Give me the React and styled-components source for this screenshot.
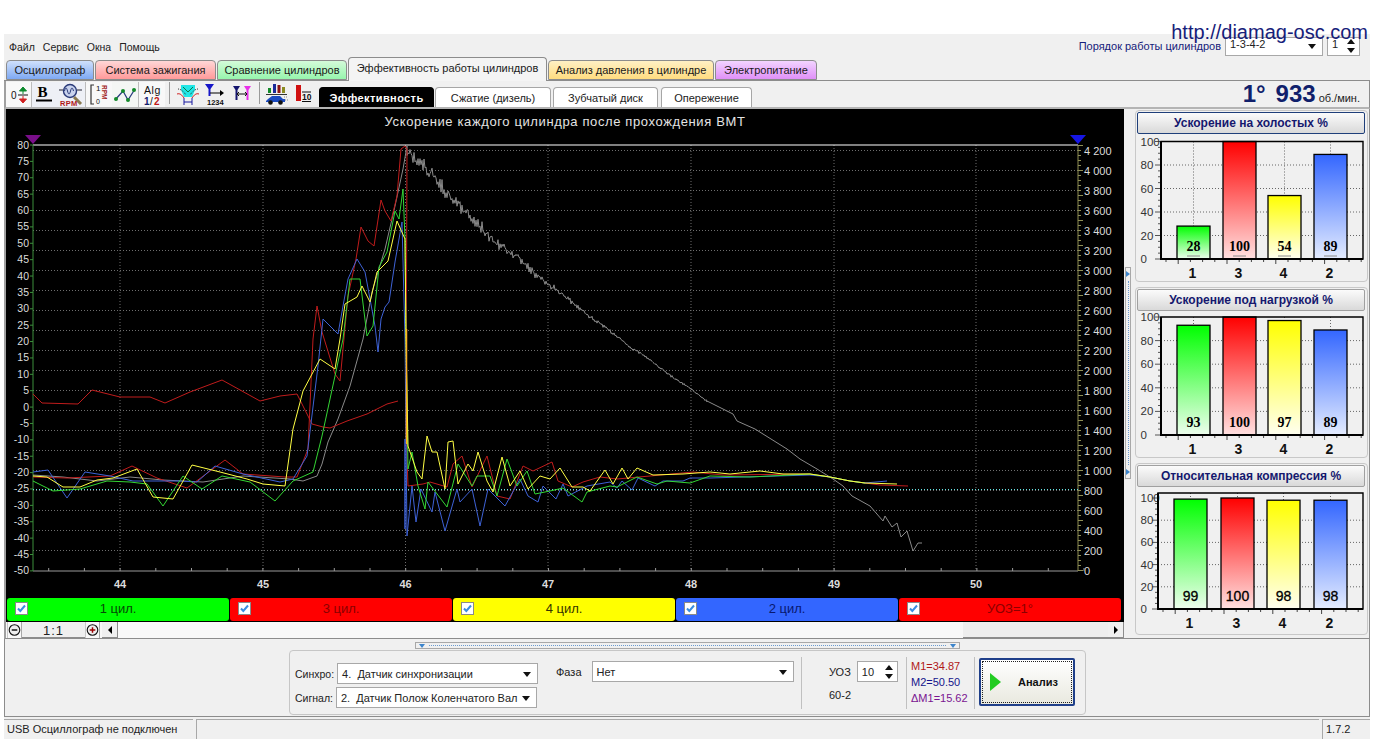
import React from "react";
import styled, { createGlobalStyle } from "styled-components";

const Global = createGlobalStyle`
  html, body { margin: 0; padding: 0; background: #fff; overflow: hidden; }
  body { font-family: "Liberation Sans", Arial, sans-serif; font-size: 11px; color: #111; }
  * { box-sizing: border-box; }
`;

const Page = styled.div`
  position: relative;
  width: 1382px;
  height: 744px;
  padding: 34px 12px 0 4px;
  background: #fff;
`;
const UrlMark = styled.div`
  position: absolute;
  top: 20px;
  right: 14px;
  font-size: 20px;
  line-height: 24px;
  color: #16207a;
  z-index: 2;
`;
const Window = styled.div`
  width: 1366px;
  height: 705px;
  background: #f0f0f0;
  display: flex;
  flex-direction: column;
`;
const MenuBar = styled.div`
  height: 27px;
  display: flex;
  align-items: center;
  justify-content: space-between;
  padding: 0 10px 1px 5px;
`;
const MenuList = styled.div`
  display: flex;
  gap: 8px;
  margin-top: 1px;
  font-size: 10.5px;
  color: #222;
`;
const OrderBox = styled.div`
  display: flex;
  align-items: center;
  gap: 4px;
  margin-top: -1px;
`;
const OrderLabel = styled.span`
  color: #16207a;
  font-size: 11px;
`;
const Field = styled.div`
  position: relative;
  width: ${(p) => p.$w}px;
  height: ${(p) => p.$h || 21}px;
  background: #fff;
  border: 1px solid #a8a8a8;
  padding: ${(p) => (p.$tight ? "0 0 0 4px" : "4px 0 0 4px")};
  font-size: 11px;
  color: #222;
  white-space: nowrap;
  overflow: hidden;
`;
const DropArrow = styled.i`
  position: absolute;
  right: 6px;
  top: 50%;
  margin-top: -2px;
  border-left: 4px solid transparent;
  border-right: 4px solid transparent;
  border-top: 5px solid #111;
`;
const SpinArrows = styled.i`
  position: absolute;
  right: 3px;
  top: 50%;
  margin-top: -7px;
  width: 9px;
  height: 14px;
  &::before, &::after {
    content: "";
    position: absolute;
    left: 0;
    border-left: 4px solid transparent;
    border-right: 4px solid transparent;
  }
  &::before { top: 0; border-bottom: 5px solid #111; }
  &::after { bottom: 0; border-top: 5px solid #111; }
`;
const TabBar = styled.div`
  height: 21px;
  padding-left: 2px;
  display: flex;
  gap: 1px;
  align-items: flex-end;
  border-bottom: 1px solid #8c8c8c;
`;
const Tab = styled.div`
  width: ${(p) => p.$w}px;
  height: ${(p) => (p.$active ? 24 : 20)}px;
  margin-bottom: ${(p) => (p.$active ? -1 : 0)}px;
  border: 1px solid #8c8c8c;
  border-bottom: ${(p) => (p.$active ? 0 : 1)}px solid #8c8c8c;
  border-radius: 4px 4px 0 0;
  background: ${(p) => p.$bg};
  font-size: 11px;
  line-height: ${(p) => (p.$active ? 21 : 18)}px;
  text-align: center;
  color: #1a1a1a;
  white-space: nowrap;
`;
const ToolRow = styled.div`
  height: 28px;
  display: flex;
  align-items: flex-end;
  border-right: 1px solid #8c8c8c;
  border-left: 2px solid #a0a0a0;
  border-bottom: 2px solid #b4b4b4;
  position: relative;
`;
const ToolGroup = styled.div`
  display: flex;
  height: 25px;
  align-items: center;
  background: ${(p) => p.$bg || "transparent"};
  border-right: ${(p) => (p.$edge ? "1px solid #bcbcbc" : "0")};
`;
const ToolSep = styled.span`
  width: 1px;
  height: 22px;
  margin: 0 ${(p) => p.$r ?? 4}px 2px ${(p) => p.$l ?? 4}px;
  background: #9a9a9a;
  align-self: center;
`;
const SubTabs = styled.div`
  display: flex;
  gap: 1px;
  align-items: flex-end;
  margin-left: 4px;
  height: 25px;
`;
const SubTab = styled.div`
  width: ${(p) => p.$w}px;
  height: 20px;
  margin-right: ${(p) => p.$mr || 0}px;
  border: 1px solid ${(p) => (p.$active ? "#000" : "#a6a6a6")};
  border-bottom: 0;
  border-radius: 4px 4px 0 0;
  background: ${(p) => (p.$active ? "#000" : "#fff")};
  color: ${(p) => (p.$active ? "#fff" : "#222")};
  font-weight: ${(p) => (p.$active ? 700 : 400)};
  letter-spacing: ${(p) => (p.$active ? "0.4px" : 0)};
  font-size: 11px;
  line-height: 20px;
  text-align: center;
`;
const Speed = styled.div`
  margin-left: auto;
  margin-right: 9px;
  display: flex;
  align-items: baseline;
  color: #101f6b;
  font-weight: 700;
  font-size: 24px;
  line-height: 26px;
`;
const SpeedGap = styled.span`
  margin-left: 10px;
`;
const SpeedUnit = styled.span`
  margin-left: 3px;
  font-size: 11px;
  line-height: 1;
  font-weight: 400;
  color: #222;
`;
const Main = styled.div`
  height: 530px;
  display: flex;
  border-left: 2px solid #a0a0a0;
  border-right: 1px solid #8c8c8c;
  border-bottom: 1px solid #8c8c8c;
`;
const ChartCol = styled.div`
  width: 1118px;
  display: flex;
  flex-direction: column;
`;
const ChartSvg = styled.svg`
  display: block;
  width: 1118px;
  height: 489px;
  background: #000;
`;
const LegendRow = styled.div`
  height: 24px;
  background: #000;
  display: flex;
  gap: 1px;
  padding: 0 3px 1px 1px;
  align-items: stretch;
`;
const LegendBtn = styled.div`
  position: relative;
  width: 222px;
  border-radius: 3px;
  background: ${(p) => p.$bg};
  color: ${(p) => p.$fg};
  font-size: 13px;
  line-height: 22px;
  text-align: center;
`;
const Check = styled.span`
  position: absolute;
  left: 8px;
  top: 4px;
  width: 13px;
  height: 13px;
  background: #fff;
  border: 1px solid #8a8a8a;
  display: flex;
`;
const ScrollRow = styled.div`
  height: 16px;
  display: flex;
  align-items: stretch;
  padding-left: 1px;
  background: #f8f8f8;
`;
const ZoomBtn = styled.div`
  width: 15px;
  display: flex;
  align-items: center;
  justify-content: center;
  border-right: 1px solid #a8a8a8;
  border-left: 1px solid #c8c8c8;
`;
const ZoomValue = styled.div`
  width: 63px;
  background: #efefef;
  border-bottom: 1px solid #8c8c8c;
  font-size: 13px;
  letter-spacing: 1px;
  line-height: 18px;
  text-align: center;
  color: #222;
`;
const ArrowBtn = styled.div`
  width: 16px;
  margin-left: ${(p) => p.$ml || 0}px;
  background: #f0f0f0;
  border-right: 1px solid #8c8c8c;
  border-bottom: 1px solid #8c8c8c;
  display: flex;
  align-items: center;
  justify-content: center;
`;
const Tri = styled.i`
  border-top: 4px solid transparent;
  border-bottom: 4px solid transparent;
  border-${(p) => (p.$left ? "right" : "left")}: 4px solid #000;
`;
const ScrollThumb = styled.div`
  width: 145px;
  margin-left: auto;
  background: #eeeeee;
  border-bottom: 1px solid #8c8c8c;
`;
const VSash = styled.div`
  width: 7px;
  display: flex;
  padding: 158px 0 0 1px;
`;
const SashBox = styled.div`
  display: flex;
  flex-direction: ${(p) => (p.$h ? "row" : "column")};
  align-items: center;
  justify-content: space-between;
  width: ${(p) => (p.$h ? "545px" : "6px")};
  height: ${(p) => (p.$h ? "7px" : "212px")};
  padding: ${(p) => (p.$h ? "0 3px" : "3px 0")};
  border: 1px solid #a8a8a8;
  background: #f0f0f0;
`;
const SashDots = styled.span`
  flex: 1;
  margin: ${(p) => (p.$h ? "0 4px" : "4px 0")};
  ${(p) => (p.$h ? "border-top" : "border-left")}: 1px dotted #6a9bd0;
`;
const SashTri = styled.i`
  ${(p) =>
    p.$h
      ? `border-left:3px solid transparent;border-right:3px solid transparent;border-top:4px solid #3d85cc;`
      : `border-top:3px solid transparent;border-bottom:3px solid transparent;border-left:4px solid #3d85cc;`}
`;
const Side = styled.div`
  width: 233px;
  margin-left: 4px;
  padding-top: 1px;
  display: flex;
  flex-direction: column;
  gap: 5px;
`;
const GroupBox = styled.div`
  height: ${(p) => p.$h || 172}px;
  padding: 1px 1px 0 1px;
  border: 1px solid #c8c8c8;
  border-radius: 4px;
  display: flex;
  flex-direction: column;
  align-items: flex-start;
`;
const GroupTitle = styled.div`
  width: 228px;
  height: 22px;
  flex: none;
  border: 1px solid ${(p) => (p.$focus ? "#1f3f7a" : "#a0a0a0")};
  border-radius: 2px;
  background: linear-gradient(#fbfbfb, #d9d9d9);
  color: #15186e;
  font-weight: 700;
  font-size: 12px;
  line-height: 20px;
  text-align: center;
`;
const BarSvg = styled.svg`
  display: block;
  width: 228px;
  height: 146px;
  flex: none;
`;
const Lower = styled.div`
  height: 80px;
  border-left: 1px solid #8c8c8c;
  border-right: 1px solid #8c8c8c;
  border-bottom: 1px solid #8c8c8c;
  padding: 3px 0 0 284px;
  display: flex;
  flex-direction: column;
`;
const HSashWrap = styled.div`
  margin: 0 0 1px 126px;
`;
const Console = styled.div`
  width: 797px;
  height: 65px;
  border: 1px solid #c6c6c6;
  border-radius: 4px;
  display: flex;
  align-items: stretch;
  padding: 6px 0 5px 5px;
`;
const ConsoleCol = styled.div`
  display: flex;
  flex-direction: column;
  gap: ${(p) => p.$gap ?? 3}px;
  width: ${(p) => p.$w}px;
  flex: none;
  padding-top: ${(p) => p.$top || 0}px;
  padding-left: ${(p) => p.$left || 0}px;
  border-right: ${(p) => (p.$sep ? "1px solid #c0c0c0" : "0")};
`;
const Labelled = styled.div`
  display: flex;
  align-items: center;
  gap: ${(p) => p.$gap || 4}px;
  color: #222;
  font-size: ${(p) => p.$fs || 11}px;
`;
const Measure = styled.div`
  font-size: 11px;
  line-height: 16px;
  color: ${(p) => p.$c};
  white-space: nowrap;
`;
const RunButton = styled.div`
  width: 96px;
  height: 48px;
  margin: 1px 0 0 4px;
  border: 2px solid #1f3f8a;
  border-radius: 2px;
  outline: 1px dotted #222;
  outline-offset: -4px;
  background: linear-gradient(#ffffff, #e9e9df);
  display: flex;
  align-items: center;
  padding-left: 9px;
  font-weight: 700;
  font-size: 11px;
  color: #111;
  flex: none;
`;
const RunIcon = styled.i`
  margin-right: 17px;
  border-top: 9px solid transparent;
  border-bottom: 9px solid transparent;
  border-left: 11px solid #22cc22;
`;
const StatusBar = styled.div`
  flex: 1;
  display: flex;
  gap: 3px;
  padding-top: 2px;
`;
const StatusCell = styled.div`
  width: ${(p) => p.$w}px;
  flex: ${(p) => (p.$grow ? 1 : "none")};
  border-left: ${(p) => (p.$lead ? "0" : "1px solid #a8a8a8")};
  border-top: 1px solid #a8a8a8;
  font-size: 11px;
  line-height: 19px;
  padding-left: 3px;
  color: #222;
  white-space: nowrap;
`;

/* ------ chart data ------ */
const P = (a) => a.map((v) => v.join(",")).join(" ");
const tail = [[830, 478], [850, 482], [865, 484]];
const RED = [
  [33, 478], [67, 479], [110, 477], [132, 467], [157, 479], [187, 489], [225, 461], [243, 475], [285, 478], [297, 478], [308, 450],
  [313, 340], [317, 307], [322, 333], [335, 375], [340, 382], [348, 297], [356, 260], [361, 228], [368, 242], [374, 247], [381, 201],
  [385, 212], [391, 222], [397, 197], [401, 150], [405, 147], [407, 150], [406, 430], [408, 487], [423, 485], [430, 483], [447, 488],
  [453, 465], [462, 457], [472, 488], [487, 457], [497, 497], [510, 500], [523, 467], [533, 472], [552, 463], [558, 482], [572, 488],
  [583, 483], [600, 478], [617, 480], [650, 477], [693, 473], [723, 476], [810, 475], ...tail, [880, 486], [908, 487],
];
const RED2 = [
  [33, 395], [42, 404], [78, 405], [92, 391], [120, 398], [150, 398], [165, 404], [190, 393], [222, 381], [260, 402], [280, 397],
  [297, 395], [312, 425], [323, 428], [330, 429], [347, 422], [367, 415], [387, 405], [398, 402],
];
const BLUE = [
  [33, 473], [48, 471], [67, 499], [85, 473], [110, 477], [133, 482], [180, 482], [197, 483], [215, 467], [243, 475], [280, 483], [293, 480],
  [307, 457], [318, 367], [323, 320], [338, 335], [343, 307], [348, 280], [357, 260], [365, 273], [375, 327], [378, 353], [381, 320],
  [385, 308], [389, 303], [395, 263], [402, 223], [405, 340], [407, 537], [412, 487], [416, 523], [421, 490], [432, 513], [435, 493],
  [445, 532], [457, 490], [460, 503], [472, 490], [480, 527], [488, 490], [505, 507], [520, 480], [528, 497], [538, 503], [543, 487],
  [556, 500], [563, 485], [568, 497], [587, 487], [610, 483], [617, 489], [622, 482], [632, 491], [638, 479], [655, 487], [663, 482],
  [683, 482], [690, 479], [710, 479], [810, 476], ...tail, [887, 482],
];
const GREEN = [
  [33, 482], [53, 492], [80, 490], [107, 482], [130, 483], [147, 485], [163, 507], [183, 477], [202, 490], [222, 477], [250, 483],
  [275, 502], [293, 482], [313, 473], [322, 437], [343, 340], [350, 280], [360, 280], [367, 337], [373, 327], [379, 268], [387, 253],
  [395, 212], [399, 220], [403, 190], [405, 240], [406, 340], [408, 470], [412, 453], [418, 487], [425, 510], [428, 483], [447, 508],
  [458, 465], [472, 487], [477, 477], [490, 477], [497, 497], [507, 460], [517, 487], [527, 472], [535, 495], [550, 492], [563, 489],
  [582, 503], [587, 493], [610, 487], [617, 488], [637, 478], [657, 485], [667, 482], [690, 484], [710, 477], [750, 478], [810, 475], ...tail,
];
const YELLOW = [
  [33, 477], [47, 478], [63, 488], [80, 488], [97, 481], [113, 479], [137, 470], [153, 498], [173, 500], [192, 466], [220, 473], [247, 480],
  [263, 485], [285, 487], [293, 430], [303, 392], [320, 360], [335, 370], [340, 340], [345, 305], [357, 298], [362, 287], [370, 303],
  [377, 273], [388, 262], [397, 222], [405, 240], [406, 340], [408, 447], [417, 473], [422, 480], [427, 437], [432, 453], [437, 453],
  [445, 490], [448, 443], [453, 442], [458, 485], [468, 465], [473, 472], [478, 453], [487, 482], [493, 493], [502, 458], [510, 487],
  [520, 472], [528, 490], [540, 477], [550, 480], [560, 469], [572, 488], [583, 488], [590, 492], [605, 471], [613, 485], [622, 469],
  [628, 480], [637, 469], [653, 476], [683, 475], [710, 473], [730, 475], [760, 472], [783, 475], [810, 475], ...tail, [897, 485],
];
const GRAY_HEAD = [
  [33, 476], [63, 478], [97, 482], [130, 478], [163, 481], [203, 483], [243, 477], [290, 480], [303, 482], [317, 477], [322, 465],
  [328, 443], [338, 420], [350, 387], [363, 340], [372, 293], [385, 250], [395, 207], [403, 170], [407, 147],
];
const GRAY_TAIL = [
  [707, 402], [733, 415], [737, 422], [755, 430], [787, 450], [800, 460], [817, 470], [833, 480], [843, 487], [852, 497], [870, 507],
  [883, 522], [885, 517], [892, 528], [897, 524], [901, 538], [907, 532], [913, 552], [918, 544], [922, 544],
];
const interp = (pts, x) => {
  for (let i = 1; i < pts.length; i++) {
    if (x <= pts[i][0]) {
      const [a, b] = [pts[i - 1], pts[i]];
      return a[1] + ((b[1] - a[1]) * (x - a[0])) / (b[0] - a[0]);
    }
  }
  return pts[pts.length - 1][1];
};
const hash = (x) => {
  const s = Math.sin(x * 12.9898) * 43758.5453;
  return (s - Math.floor(s)) * 2 - 1;
};
const grayNoise = (() => {
  const mean = [[407, 150], [480, 228], [548, 285], [620, 340], [707, 402]];
  const amp = [[407, 6], [480, 5.5], [520, 3.5], [548, 2.5], [620, 1.4], [707, 0.8]];
  const out = [];
  for (let x = 407; x <= 707; x += 1) {
    const wobble = 1.2 * Math.sin(x / 7) * (x < 560 ? 1 : 0.5);
    out.push([x, interp(mean, x) + wobble + ((x % 2 ? 1 : -1) * 0.4 + hash(x) * 0.9) * interp(amp, x)]);
  }
  return out;
})();
const GRAY = [...GRAY_HEAD, ...grayNoise, ...GRAY_TAIL];

const range = (a, b, s) => {
  const r = [];
  for (let v = a; v <= b + 0.01; v += s) r.push(v);
  return r;
};
const leftLabels = range(0, 26, 1).map((i) => ({ v: 80 - i * 5, y: 146 + i * 16.38 }));
const rightLabels = range(0, 21, 1).map((i) => ({
  t: i === 0 ? "0" : i < 5 ? String(i * 200) : `${Math.floor((i * 200) / 1000)} ${String((i * 200) % 1000).padStart(3, "0")}`,
  y: 571.5 - i * 20,
}));
const vLines = [120, 263, 405.5, 548, 691, 834, 976];

function Chart() {
  return (
    <ChartSvg viewBox="6 110 1118 489">
      <text x="565" y="127" fill="#e4e4e4" fontSize="13" letterSpacing="0.62" textAnchor="middle" fontFamily="Liberation Sans">
        Ускорение каждого цилиндра после прохождения ВМТ
      </text>
      {rightLabels.slice(1).map((l) => (
        <line key={l.y} x1="33" x2="1078" y1={l.y} y2={l.y} stroke="#6e6e6e" strokeDasharray="1 2" />
      ))}
      {vLines.map((x) => (
        <line key={x} x1={x} x2={x} y1="146" y2="572" stroke="#6e6e6e" strokeDasharray="1 2" />
      ))}
      <line x1="33" x2="1078" y1="146" y2="146" stroke="#fff" strokeWidth="1.2" />
      <line x1="33" x2="1078" y1="572" y2="572" stroke="#9a9a9a" />
      <line x1="33" x2="33" y1="146" y2="572" stroke="#3c8f3c" />
      <line x1="1078" x2="1078" y1="146" y2="572" stroke="#8f8f55" />
      {leftLabels.map((l) => (
        <g key={l.v}>
          <line x1="33" x2="30" y1={l.y} y2={l.y} stroke="#3c8f3c" />
          <text x="29" y={l.y + 3.5} fill="#dcdcdc" fontSize="10.5" textAnchor="end" fontFamily="Liberation Sans">
            {l.v}
          </text>
        </g>
      ))}
      {range(0, 85, 1).map((i) => (
        <line key={i} x1="1078" x2={i % 5 === 0 ? 1083 : 1081} y1={571.5 - i * 5} y2={571.5 - i * 5} stroke="#8f8f55" />
      ))}
      {rightLabels.map((l) => (
        <text key={l.y} x="1084" y={l.y + 4} fill="#dcdcdc" fontSize="11" fontFamily="Liberation Sans">
          {l.t}
        </text>
      ))}
      {range(0, 29, 1).map((i) => (
        <line key={i} x1={48.7 + i * 35.7} x2={48.7 + i * 35.7} y1="572" y2="569" stroke="#9a9a9a" />
      ))}
      {vLines.map((x, i) => (
        <text key={x} x={x} y="589" fill="#dcdcdc" fontSize="11" fontWeight="700" textAnchor="middle" fontFamily="Liberation Sans">
          {44 + i}
        </text>
      ))}
      <line x1="33" x2="1078" y1="490.5" y2="490.5" stroke="#66e0e0" strokeDasharray="1 2" />
      <g fill="none" strokeLinejoin="round">
        <polyline points={P(GRAY)} stroke="#8a8a8a" />
        <polyline points={P(RED2)} stroke="#c01c1c" />
        <polyline points={P(RED)} stroke="#c01c1c" />
        <polyline points={P(BLUE)} stroke="#3e62d6" />
        <polyline points={P(GREEN)} stroke="#34d634" />
        <polyline points={P(YELLOW)} stroke="#ffff44" />
        <line x1="406.5" x2="406.5" y1="330" y2="445" stroke="#ffb020" strokeWidth="1.5" />
        <line x1="405" x2="405" y1="440" y2="530" stroke="#3e62d6" strokeWidth="1.5" />
      </g>
      <polygon points="25,136 41,136 33,145" fill="#7a0f8a" />
      <polygon points="1070,136 1086,136 1078,145" fill="#1616e6" />
    </ChartSvg>
  );
}

/* ------ side bars ------ */
const barColors = [
  ["gGreen", "#00ff00", "#eefeee"],
  ["gRed", "#ff0000", "#ffe0e0"],
  ["gYellow", "#ffff00", "#fffff0"],
  ["gBlue", "#3366ff", "#e4ecff"],
];
function BarChart({ id, top, plotTop, bottom, y100, left, barX, values, marks, serif }) {
  const scale = (bottom - y100) / 100;
  const cats = ["1", "3", "4", "2"];
  const ticks = [0, 20, 40, 60, 80, 100];
  return (
    <BarSvg viewBox={`1137 ${top} 228 146`}>
      <defs>
        {barColors.map(([n, a, b]) => (
          <linearGradient key={n} id={id + n} x1="0" x2="0" y1="0" y2="1">
            <stop offset="0" stopColor={a} />
            <stop offset="1" stopColor={b} />
          </linearGradient>
        ))}
      </defs>
      {[20, 40, 60, 80].map((t) => (
        <line key={t} x1={left} x2="1363" y1={bottom - t * scale} y2={bottom - t * scale} stroke="#666" strokeDasharray="1 2" />
      ))}
      {barX.map((x) => (
        <line key={x} x1={x + 16.5} x2={x + 16.5} y1={plotTop} y2={bottom} stroke="#666" strokeDasharray="1 2" />
      ))}
      {range(0, 16, 1).map((i) => (
        <line key={i} x1={left + 5 + i * 12.2} x2={left + 5 + i * 12.2} y1={bottom} y2={bottom + (i % 4 === 1 ? 5 : 3)} stroke="#444" />
      ))}
      {range(0, 20, 1).map((i) => (
        <line key={i} x1={left} x2={left - (i % 4 === 0 ? 6 : 3)} y1={bottom - i * 5 * scale} y2={bottom - i * 5 * scale} stroke="#555" />
      ))}
      {ticks.map((t) => (
        <text key={t} x="1140.5" y={bottom - t * scale + 4} fontSize="11.5" fill="#333" fontFamily="Liberation Sans">
          {t}
        </text>
      ))}
      {values.map((v, i) => (
        <g key={i}>
          <rect
            x={barX[i]}
            y={bottom - v * scale}
            width="33"
            height={v * scale}
            fill={`url(#${id}${barColors[i][0]})`}
            stroke="#000"
            strokeWidth="1.3"
          />
          {marks && <line x1={barX[i] + 10} x2={barX[i] + 23} y1={bottom - 3} y2={bottom - 3} stroke="#8a8a8a" />}
          <text
            x={barX[i] + 16.5}
            y={bottom - 8}
            fontSize="14"
            fontWeight={serif ? 700 : 400}
            textAnchor="middle"
            fill="#000"
            stroke={serif ? "none" : "#000"}
            strokeWidth="0.3"
            fontFamily={serif ? "Liberation Serif" : "Liberation Sans"}
          >
            {v}
          </text>
          <text x={barX[i] + 15.5} y={bottom + 19} fontSize="14" fontWeight="700" textAnchor="middle" fill="#111" fontFamily="Liberation Sans">
            {cats[i]}
          </text>
        </g>
      ))}
      <path d={`M${left} ${plotTop}H1363V${bottom}H${left}Z`} fill="none" stroke="#000" strokeWidth="1.4" />
      <path d={`M${left} ${plotTop}V${bottom}H1363`} fill="none" stroke="#000" strokeWidth="2" />
    </BarSvg>
  );
}

/* ------ toolbar icons ------ */
const Ico = styled.svg`
  display: block;
  flex: none;
  width: ${(p) => p.width}px;
  height: 25px;
  margin: 0 ${(p) => p.$m ?? 2}px;
`;
const T = ({ children, ...r }) => (
  <text fontFamily="Liberation Sans" {...r}>
    {children}
  </text>
);
const IconZero = () => (
  <Ico width="23" viewBox="0 0 23 25" $m={1}>
    <T x="4" y="17" fontSize="10" fill="#111">0</T>
    <path d="M16 5l-3.5 4h7zM16 9v3" fill="#0c8a2c" stroke="#0c8a2c" />
    <path d="M11 13h10" stroke="#111" />
    <path d="M16 21l-3.5-4h7zM16 17v-3" fill="#d02020" stroke="#d02020" />
  </Ico>
);
const IconBold = () => (
  <Ico width="23" viewBox="0 0 23 25" $m={1}>
    <T x="4.5" y="15" fontSize="15" fontWeight="700" fill="#000" fontFamily="Liberation Serif">B</T>
    <path d="M3 18.5h16" stroke="#000" strokeWidth="2" />
  </Ico>
);
const IconRpm = () => (
  <Ico width="26" viewBox="0 0 26 25" $m={1}>
    <path d="M16 15l7 7" stroke="#8a7a50" strokeWidth="3" />
    <path d="M1 8h4M19 8h5" stroke="#223" />
    <circle cx="12" cy="9" r="6.5" fill="#c9d3ee" stroke="#2a3a78" strokeWidth="1.4" />
    <path d="M6.5 9c1-4 2-4 3 0s2 4 3 0 2-4 3 0" fill="none" stroke="#2a3a78" />
    <T x="2" y="23.5" fontSize="7.5" fill="#b01818" fontWeight="700" letterSpacing=".3">RPM</T>
  </Ico>
);
const IconRange = () => (
  <Ico width="24" viewBox="0 0 24 25" $m={1}>
    <path d="M7 3H4v19h3" fill="none" stroke="#333" strokeWidth="1.2" />
    <T x="9" y="9" fontSize="8" fill="#111">1</T>
    <T x="9" y="22" fontSize="7" fill="#111">0</T>
    <T x="0" y="0" fontSize="6.5" fill="#a01818" fontWeight="700" transform="translate(15 3) rotate(90)">RPM</T>
  </Ico>
);
const IconLine = () => (
  <Ico width="24" viewBox="0 0 24 25" $m={1}>
    <path d="M2 18l8-9 5 9 7-11" fill="none" stroke="#2b3e7e" strokeWidth="1.3" />
    <g fill="#148a2a">
      <circle cx="3" cy="17" r="2" />
      <circle cx="10" cy="9" r="2" />
      <circle cx="15" cy="18" r="2" />
      <circle cx="21" cy="8" r="2" />
    </g>
  </Ico>
);
const IconAlg = () => (
  <Ico width="22" viewBox="0 0 22 25" $m={2}>
    <T x="3" y="12" fontSize="10.5" fill="#111" letterSpacing=".6">Alg</T>
    <T x="3" y="23" fontSize="10" fontWeight="700" fill="#14206e">1</T>
    <T x="9" y="23" fontSize="10" fill="#111">/</T>
    <T x="13" y="23" fontSize="10" fontWeight="700" fill="#c01818">2</T>
  </Ico>
);
const IconCyan = () => (
  <Ico width="24" viewBox="0 0 24 25">
    <path d="M5 3h14v5l-3 7H8L5 8z" fill="#22e6e6" />
    <path d="M7 5l5 5 5-5" fill="none" stroke="#0c7a4a" />
    <path d="M2 7c3 0 6 3 8 6M22 7c-3 0-6 3-8 6" fill="none" stroke="#333" strokeDasharray="1 1" />
    <path d="M1 12c3-1 5 1 7 4M23 12c-3-1-5 1-7 4" fill="none" stroke="#d02020" />
    <path d="M8 16v7M16 16v7M8 20h8" stroke="#1818a0" />
  </Ico>
);
const Icon1234 = () => (
  <Ico width="22" viewBox="0 0 22 25">
    <path d="M1 2h9L6.5 7v7h-2V7z" fill="#1616c8" />
    <path d="M6 11h12" stroke="#000" />
    <path d="M20 11l-4-3v6z" fill="#000" />
    <T x="3" y="23" fontSize="7.5" fontWeight="700" fill="#111">1234</T>
  </Ico>
);
const IconDouble = () => (
  <Ico width="20" viewBox="0 0 20 25" $m={4}>
    <path d="M1 4h7L5.5 8v10h-2V8z" fill="#15156e" />
    <path d="M12 4h7L16.5 8v10h-2V8z" fill="#e830e8" />
    <path d="M6 12h8M7 10l-2 2 2 2M13 10l2 2-2 2" fill="none" stroke="#111" />
  </Ico>
);
const IconCar = () => (
  <Ico width="24" viewBox="0 0 24 25">
    <rect x="3" y="6" width="3" height="5" fill="#148a2a" />
    <rect x="8" y="2" width="3" height="9" fill="#1a2a9a" />
    <rect x="12.5" y="3" width="3" height="8" fill="#8a1414" />
    <rect x="17" y="5" width="3" height="6" fill="#8a8a20" />
    <path d="M1 12.5h21" stroke="#333" />
    <path d="M1 19l2-2 4-3h8l3 3h2v3H1z" fill="#1a4ac0" />
    <circle cx="5.5" cy="20.5" r="2.3" fill="#111" />
    <circle cx="15.5" cy="20.5" r="2.3" fill="#111" />
    <path d="M19 15h4M20 18h4" stroke="#888" strokeDasharray="1 1" />
  </Ico>
);
const IconTen = () => (
  <Ico width="18" viewBox="0 0 18 25" $m={3}>
    <rect x="2" y="3" width="5" height="16" fill="#d01010" />
    <T x="8" y="18" fontSize="8.5" fontWeight="700" fill="#111">10</T>
    <path d="M8 10h9M8 19.5h9" stroke="#111" />
  </Ico>
);
const RoundIcon = ({ plus }) => (
  <svg width="14" height="14" viewBox="0 0 14 14">
    <circle cx="7" cy="7" r="5.7" fill="#eee" stroke="#111" strokeWidth="1.2" />
    <path d={plus ? "M4 7h6M7 4v6" : "M4 7h6"} stroke={plus ? "#900" : "#111"} strokeWidth="1.6" />
  </svg>
);
const CheckMark = () => (
  <svg width="11" height="11" viewBox="0 0 11 11">
    <path d="M2 5.5l2.3 2.5L9 2.5" fill="none" stroke="#3a8de0" strokeWidth="2" />
  </svg>
);

const legend = [
  ["1 цил.", "#00ff00", "#064806"],
  ["3 цил.", "#ff0000", "#8a0000"],
  ["4 цил.", "#ffff00", "#333300"],
  ["2 цил.", "#3366ff", "#08186e"],
  ["УОЗ=1°", "#ff0000", "#8a0000"],
];
const tabs = [
  ["Осциллограф", 88, "linear-gradient(#cfe0fb,#7ea9f3)"],
  ["Система зажигания", 121, "linear-gradient(#ffd6d6,#ff9a9a)"],
  ["Сравнение цилиндров", 130, "linear-gradient(#d4fbd9,#97f5ad)"],
  ["Эффективность работы цилиндров", 199, "#f4f4f4", true],
  ["Анализ давления в цилиндре", 166, "linear-gradient(#fff0c4,#ffdc80)"],
  ["Электропитание", 102, "linear-gradient(#f2d4ff,#e090f8)"],
];

export default function App() {
  return (
    <>
      <Global />
      <Page>
        <UrlMark>http://diamag-osc.com</UrlMark>
        <Window>
          <MenuBar>
            <MenuList>
              <span>Файл</span>
              <span>Сервис</span>
              <span>Окна</span>
              <span>Помощь</span>
            </MenuList>
            <OrderBox>
              <OrderLabel>Порядок работы цилиндров</OrderLabel>
              <Field $w={98} $h={19} $tight>
                1-3-4-2
                <DropArrow />
              </Field>
              <Field $w={33} $h={19} $tight>
                1
                <SpinArrows />
              </Field>
            </OrderBox>
          </MenuBar>
          <TabBar>
            {tabs.map(([t, w, bg, active]) => (
              <Tab key={t} $w={w} $bg={bg} $active={active}>
                {t}
              </Tab>
            ))}
          </TabBar>
          <ToolRow>
            <ToolGroup $bg="#f8f8f8" $edge>
              <IconZero />
            </ToolGroup>
            <ToolGroup $bg="#eef0f6" $edge>
              <IconBold />
              <IconRpm />
            </ToolGroup>
            <ToolGroup $bg="#f8f8f8">
              <IconRange />
            </ToolGroup>
            <ToolGroup $bg="#f4f6f4" $edge>
              <IconLine />
            </ToolGroup>
            <ToolGroup $bg="#f8f8f8">
              <IconAlg />
            </ToolGroup>
            <ToolSep $l={4} $r={4} />
            <IconCyan />
            <Icon1234 />
            <IconDouble />
            <ToolSep $l={3} $r={3} />
            <IconCar />
            <IconTen />
            <SubTabs>
              <SubTab $active $w={115}>Эффективность</SubTab>
              <SubTab $w={116} $mr={1}>Сжатие (дизель)</SubTab>
              <SubTab $w={105} $mr={2}>Зубчатый диск</SubTab>
              <SubTab $w={91}>Опережение</SubTab>
            </SubTabs>
            <Speed>
              1°
              <SpeedGap>933</SpeedGap>
              <SpeedUnit>об./мин.</SpeedUnit>
            </Speed>
          </ToolRow>
          <Main>
            <ChartCol>
              <Chart />
              <LegendRow>
                {legend.map(([t, bg, fg]) => (
                  <LegendBtn key={t} $bg={bg} $fg={fg}>
                    <Check>
                      <CheckMark />
                    </Check>
                    {t}
                  </LegendBtn>
                ))}
              </LegendRow>
              <ScrollRow>
                <ZoomBtn>
                  <RoundIcon />
                </ZoomBtn>
                <ZoomValue>1:1</ZoomValue>
                <ZoomBtn>
                  <RoundIcon plus />
                </ZoomBtn>
                <ArrowBtn $ml={2}>
                  <Tri $left />
                </ArrowBtn>
                <ScrollThumb />
                <ArrowBtn>
                  <Tri />
                </ArrowBtn>
              </ScrollRow>
            </ChartCol>
            <VSash>
              <SashBox>
                <SashTri />
                <SashDots />
                <SashTri />
              </SashBox>
            </VSash>
            <Side>
              <GroupBox>
                <GroupTitle $focus>Ускорение на холостых %</GroupTitle>
                <BarChart id="a" top={135} plotTop={142.5} bottom={260} y100={142.5} left={1161} barX={[1177, 1223, 1268, 1314]} values={[28, 100, 54, 89]} marks serif />
              </GroupBox>
              <GroupBox $h={171}>
                <GroupTitle>Ускорение под нагрузкой %</GroupTitle>
                <BarChart id="b" top={312} plotTop={318} bottom={436} y100={318} left={1161} barX={[1177, 1223, 1268, 1314]} values={[93, 100, 97, 89]} serif />
              </GroupBox>
              <GroupBox>
                <GroupTitle>Относительная компрессия %</GroupTitle>
                <BarChart id="c" top={488} plotTop={494} bottom={610} y100={499} left={1158} barX={[1174, 1221, 1267, 1314]} values={[99, 100, 98, 98]} />
              </GroupBox>
            </Side>
          </Main>
          <Lower>
            <HSashWrap>
              <SashBox $h>
                <SashTri $h />
                <SashDots $h />
                <SashTri $h />
              </SashBox>
            </HSashWrap>
            <Console>
              <ConsoleCol $w={253} $top={6}>
                <Labelled $gap={3} $fs={10.5}>
                  <span>Синхро:</span>
                  <Field $w={201}>
                    4.&nbsp; Датчик синхронизации
                    <DropArrow />
                  </Field>
                </Labelled>
                <Labelled $gap={3} $fs={10.5}>
                  <span>Сигнал:</span>
                  <Field $w={201}>
                    2.&nbsp; Датчик Полож Коленчатого Вал
                    <DropArrow />
                  </Field>
                </Labelled>
              </ConsoleCol>
              <ConsoleCol $w={254} $sep $left={8} $top={4}>
                <Labelled $gap={10}>
                  <span>Фаза</span>
                  <Field $w={202}>
                    Нет
                    <DropArrow />
                  </Field>
                </Labelled>
              </ConsoleCol>
              <ConsoleCol $w={105} $sep $left={27} $top={4} $gap={7}>
                <Labelled $gap={6}>
                  <span>УОЗ</span>
                  <Field $w={41}>
                    10
                    <SpinArrows />
                  </Field>
                </Labelled>
                <Labelled>60-2</Labelled>
              </ConsoleCol>
              <ConsoleCol $w={68} $sep $left={4} $gap={0} $top={1}>
                <Measure $c="#b01818">M1=34.87</Measure>
                <Measure $c="#14148c">M2=50.50</Measure>
                <Measure $c="#7a1490">ΔM1=15.62</Measure>
              </ConsoleCol>
              <RunButton>
                <RunIcon />
                Анализ
              </RunButton>
            </Console>
          </Lower>
          <StatusBar>
            <StatusCell $lead $w={189}>USB Осциллограф не подключен</StatusCell>
            <StatusCell $grow />
            <StatusCell $w={48}>1.7.2</StatusCell>
          </StatusBar>
        </Window>
      </Page>
    </>
  );
}
